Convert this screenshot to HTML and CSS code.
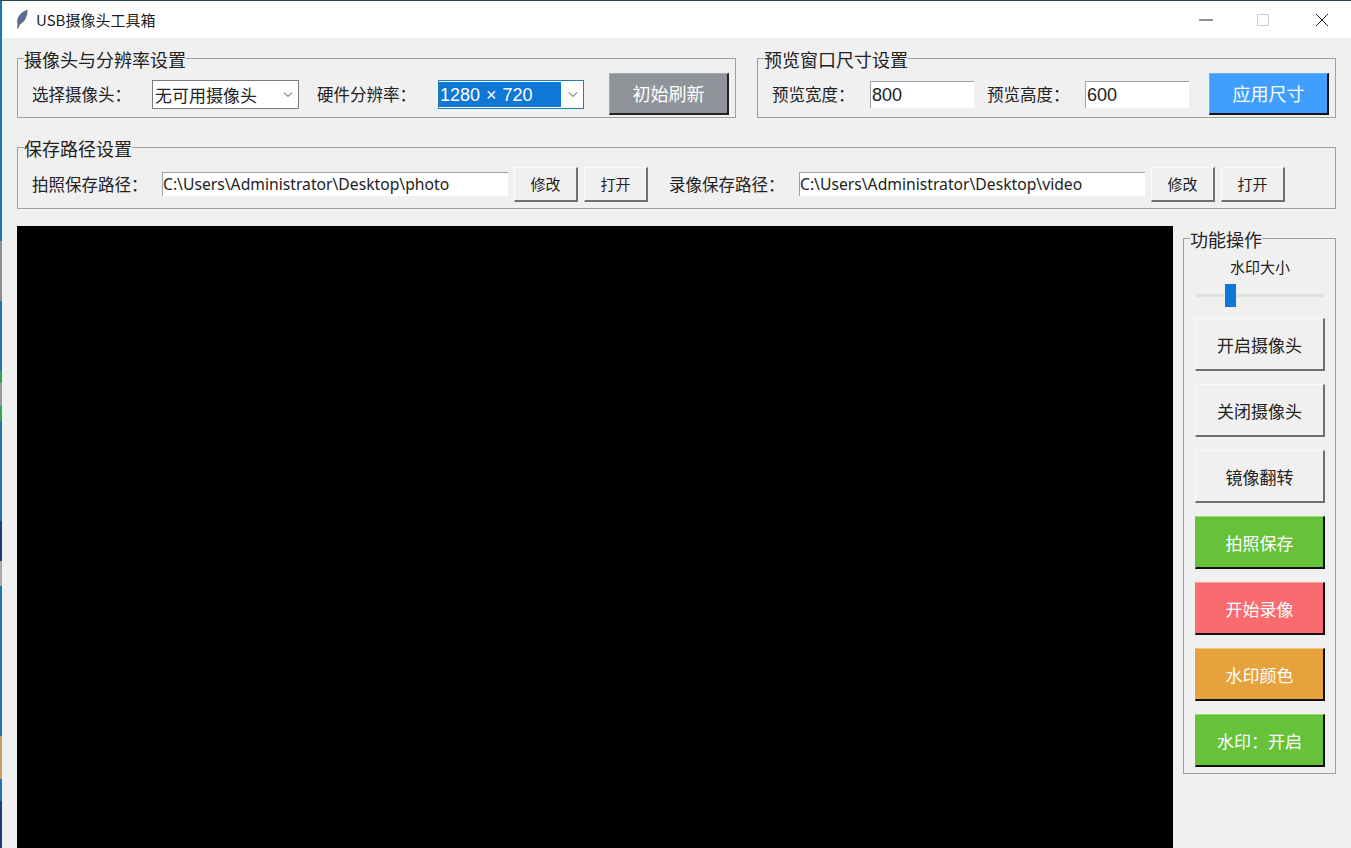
FILE: index.html
```html
<!DOCTYPE html>
<html lang="zh-CN">
<head>
<meta charset="utf-8">
<title>USB摄像头工具箱</title>
<link rel="stylesheet" href="styles.css">
</head>
<body>
<div class="window">
  <header class="titlebar">
    <svg class="feather" viewBox="0 0 12 20" width="12" height="20"><path d="M1 19.5 L1.5 15 C0 10 3 4 11.5 0.5 C11.8 6 10 12 4 15.5 L2.2 19.5 Z" fill="#5a6d8c"/></svg>
    <span class="title">USB摄像头工具箱</span>
    <div class="controls">
      <svg class="ctl-min" width="16" height="16" viewBox="0 0 16 16"><path d="M1 8H15" stroke="#222" stroke-width="1"/></svg>
      <svg width="16" height="16" viewBox="0 0 16 16"><rect x="2.5" y="2.5" width="11" height="11" fill="none" stroke="#ccc"/></svg>
      <svg width="16" height="16" viewBox="0 0 16 16"><path d="M2 2L14 14M14 2L2 14" stroke="#222" stroke-width="1"/></svg>
    </div>
  </header>
  <main class="content">
    <div class="top-row">
      <fieldset class="group group-camera">
        <legend>摄像头与分辨率设置</legend>
        <div class="row row-top">
          <span class="label w120">选择摄像头&#xFF1A;</span>
          <div class="select w147"><span class="select-text">无可用摄像头</span><svg class="chev" width="10" height="7" viewBox="0 0 10 7"><path d="M1 1.5L5 5.5L9 1.5" fill="none" stroke="#444"/></svg></div>
          <span class="label w121 ml18">硬件分辨率&#xFF1A;</span>
          <div class="select select-focus w146"><span class="select-text selected">1280 × 720</span><svg class="chev" width="10" height="7" viewBox="0 0 10 7"><path d="M1 1.5L5 5.5L9 1.5" fill="none" stroke="#444"/></svg></div>
          <button class="btn btn-big btn-gray ml25">初始刷新</button>
        </div>
      </fieldset>
      <fieldset class="group group-preview">
        <legend>预览窗口尺寸设置</legend>
        <div class="row row-top">
          <span class="label w98">预览宽度&#xFF1A;</span>
          <div class="input input-size">800</div>
          <span class="label w98 ml13">预览高度&#xFF1A;</span>
          <div class="input input-size">600</div>
          <button class="btn btn-big btn-blue ml20">应用尺寸</button>
        </div>
      </fieldset>
    </div>
    <fieldset class="group group-path">
      <legend>保存路径设置</legend>
      <div class="row row-path">
        <span class="label w130">拍照保存路径&#xFF1A;</span>
        <div class="input input-path">C:\Users\Administrator\Desktop\photo</div>
        <button class="btn btn-small ml6">修改</button>
        <button class="btn btn-small ml6">打开</button>
        <span class="label w130 ml21">录像保存路径&#xFF1A;</span>
        <div class="input input-path">C:\Users\Administrator\Desktop\video</div>
        <button class="btn btn-small ml6">修改</button>
        <button class="btn btn-small ml6">打开</button>
      </div>
    </fieldset>
    <div class="bottom-row">
      <div class="video"></div>
      <fieldset class="group group-side">
        <legend>功能操作</legend>
        <div class="side-inner">
          <div class="scale-label">水印大小</div>
          <div class="slider"><div class="track"></div><div class="thumb"></div></div>
          <div class="side-buttons">
            <button class="btn btn-side">开启摄像头</button>
            <button class="btn btn-side">关闭摄像头</button>
            <button class="btn btn-side">镜像翻转</button>
            <button class="btn btn-side btn-green">拍照保存</button>
            <button class="btn btn-side btn-red">开始录像</button>
            <button class="btn btn-side btn-orange">水印颜色</button>
            <button class="btn btn-side btn-green">水印&#xFF1A;开启</button>
          </div>
        </div>
      </fieldset>
    </div>
  </main>
</div>
</body>
</html>
```
FILE: styles.css
```css
* { box-sizing: border-box; }
html, body { margin: 0; height: 100%; overflow: hidden; }
body {
  background: #f0f0f0;
  font-family: "Noto Sans CJK SC", "Liberation Sans", sans-serif;
  color: #222;
}
.window {
  height: 848px;
  display: flex;
  flex-direction: column;
  border-top: 1px solid #26444c;
  padding-left: 2px;
  overflow: hidden;
  background: linear-gradient(to bottom,
    #1878b0 0 240px, #8a8f94 240px 300px, #1c78b0 300px 370px, #2ea84f 370px 382px,
    #9a9a9a 382px 405px, #2ea84f 405px 420px, #1c78b0 420px 520px, #1a3f7a 520px 560px,
    #a5a9a8 560px 585px, #1c78b0 585px 735px, #c9a060 735px 778px, #1c78b0 778px 800px,
    #1a3f7a 800px 848px);
}
.titlebar { height: 37px; background: #fff; display: flex; align-items: center; flex: none; padding-left: 14px; }
.feather { flex: none; margin-bottom: 1px; }
.title { font-size: 15px; margin-left: 8px; margin-bottom: 1px; color: #1c1c1c; }
.controls { margin-left: auto; display: flex; gap: 43px; padding-right: 21px; }
.ctl-min { margin-right: -2px; margin-left: 2px; }
.content { flex: 1; min-height: 0; background: #f0f0f0; padding-left: 15px; padding-right: 15px; display: flex; flex-direction: column; }
.top-row { display: flex; gap: 21px; margin-top: 9px; }
.group { border: 1px solid #a0a0a0; margin: 0; padding: 0; min-width: 0; }
.group legend { margin-left: 6px; padding: 2px 0 0; font-size: 18px; line-height: 20px; color: #222; }
.group-camera { width: 719px; }
.group-preview { width: 579px; }
.group-path { margin-top: 18px; }
.row { display: flex; align-items: center; padding-left: 14px; }
.row-top { padding-top: 4px; padding-bottom: 2px; }
.row-path { padding-top: 9px; padding-bottom: 6px; }
.label { font-size: 16.5px; flex: none; white-space: nowrap; }
.row-path .label { margin-bottom: 2px; }
.w98 { width: 98px; } .w120 { width: 120px; } .w121 { width: 121px; } .w130 { width: 130px; }
.w146 { width: 146px; } .w147 { width: 147px; }
.ml6 { margin-left: 6px; } .ml13 { margin-left: 13px; } .ml18 { margin-left: 18px; }
.ml20 { margin-left: 20px; } .ml21 { margin-left: 21px; } .ml25 { margin-left: 25px; }
.select { height: 29px; border: 1px solid #7a7a7a; background: #fff; display: flex; align-items: center; justify-content: space-between; padding-right: 5px; flex: none; font-size: 17px; }
.select-text { padding-left: 2px; line-height: 25px; font-family: "Noto Sans CJK SC", sans-serif; }
.select-focus { border-color: #1c7fb0; font-size: 18px; }
.select-focus .select-text.selected { background: #0f78d6; color: #fff; width: 122px; height: 25px; margin-left: 0; padding-left: 1px; line-height: 27px; word-spacing: 1px; font-family: "Liberation Sans", sans-serif; }
.chev { flex: none; }
.input { background: #fff; border-top: 1px solid #a0a0a0; border-left: 1px solid #a0a0a0; flex: none; white-space: nowrap; overflow: hidden; display: flex; align-items: center; }
.input-size { width: 104px; height: 27px; font-size: 18px; padding-left: 1px; padding-top: 2px; font-family: "Liberation Sans", sans-serif; }
.input-path { width: 346px; height: 24px; font-size: 15.7px; padding-left: 0; padding-bottom: 1px; margin-bottom: 1px; font-family: "Noto Sans", sans-serif; }
.btn { font-family: "Noto Sans CJK SC", sans-serif; border-style: solid; border-width: 1px 2px 2px 1px; border-color: #fafafa #707070 #707070 #fafafa; background: #f0f0f0; color: #222; padding: 0; flex: none; }
.btn-big { width: 120px; height: 42px; font-size: 18px; color: #fff; padding-bottom: 1px; }
.btn-small { width: 64px; height: 35px; font-size: 15px; padding-bottom: 1px; }
.btn-gray { background: #909399; border-color: #a6a8ad #222 #222 #a6a8ad; }
.btn-blue { background: #409eff; border-color: #66b1ff #111 #111 #66b1ff; }
.btn-green { background: #67c23a; border-color: #8fe06a #111 #111 #67c23a; color: #fff; }
.btn-red { background: #f96b6f; border-color: #fb9ea0 #111 #111 #f96b6f; color: #fff; }
.btn-orange { background: #e6a23c; border-color: #f5c77e #111 #111 #e6a23c; color: #fff; }
.bottom-row { flex: 1; min-height: 0; margin-top: 17px; display: flex; gap: 10px; align-items: flex-start; }
.video { width: 1156px; height: 100%; background: #000; flex: none; }
.group-side { width: 153px; margin-top: 1px; flex: none; }
.side-inner { padding: 8px 10px 6px 11px; }
.scale-label { font-size: 15px; line-height: 20px; text-align: center; }
.slider { position: relative; height: 24px; margin: 7px 1px 10px 1px; }
.track { position: absolute; left: 0; right: 0; top: 10px; height: 3px; background: #e0e0e0; }
.thumb { position: absolute; left: 29px; top: 0; width: 11px; height: 23px; background: #0f78d6; }
.side-buttons { display: flex; flex-direction: column; gap: 13px; }
.btn-side { width: 130px; height: 53px; font-size: 17px; }
```
